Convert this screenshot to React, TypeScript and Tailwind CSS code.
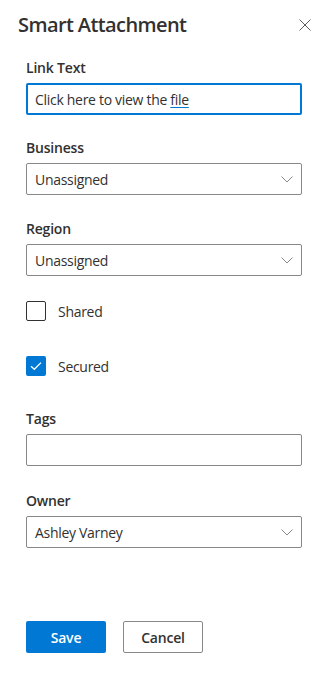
import React from "react";

const font = { fontFamily: '"Open Sans", "Noto Sans", sans-serif' };

function Chevron() {
  return (
    <svg width="12" height="7" viewBox="0 0 12 7" className="absolute right-[8px] top-[12px]">
      <path d="M0.5 0.5 L6 6 L11.5 0.5" fill="none" stroke="#8a8886" strokeWidth="1" />
    </svg>
  );
}

function Label({ children }: { children: React.ReactNode }) {
  return <div className="py-[5px] text-[14px] leading-5 font-semibold text-[#323130] tracking-[-0.2px]">{children}</div>;
}

function Dropdown({ value }: { value: string }) {
  return (
    <div className="relative h-[32px] border border-[#8a8886] rounded-[2px] pl-[8px] pr-[28px] flex items-center text-[14px] text-[#323130] tracking-[-0.3px]">
      <span>{value}</span>
      <Chevron />
    </div>
  );
}

export default function App() {
  return (
    <div className="w-[331px] h-[693px] bg-white text-[#323130]" style={font}>
      <div className="flex items-start justify-between pl-[18px] pr-[20px] pt-[11px] h-[43px]">
        <div className="text-[20px] leading-[28px] font-semibold tracking-[-0.6px]">Smart Attachment</div>
        <svg width="12" height="12" viewBox="0 0 12 12" className="mt-[8px]">
          <path d="M0.5 0.5 L11.5 11.5 M11.5 0.5 L0.5 11.5" stroke="#605e5c" strokeWidth="1" />
        </svg>
      </div>
      <div className="px-[26px] pr-[29px]">
        <div className="mt-[10px]">
          <Label>Link Text</Label>
          <div className="h-[32px] border-2 border-[#0078d4] rounded-[2px] pl-[7px] flex items-center text-[14px] tracking-[-0.3px]">
            <span>
              Click here to view the{" "}
              <span className="underline decoration-[#0078d4] underline-offset-2">file</span>
            </span>
          </div>
        </div>
        <div className="mt-[18px]">
          <Label>Business</Label>
          <Dropdown value="Unassigned" />
        </div>
        <div className="mt-[19px]">
          <Label>Region</Label>
          <Dropdown value="Unassigned" />
        </div>
        <div className="mt-[25px] flex items-center gap-[12px] h-[20px]">
          <div className="w-[20px] h-[20px] border border-[#323130] rounded-[2px]" />
          <span className="text-[14px] tracking-[-0.3px]">Shared</span>
        </div>
        <div className="mt-[35px] flex items-center gap-[12px] h-[20px]">
          <div className="w-[20px] h-[20px] bg-[#0078d4] rounded-[2px] flex items-center justify-center">
            <svg width="12" height="10" viewBox="0 0 12 10">
              <path d="M1 5.2 L4.3 8.3 L11 1.6" fill="none" stroke="white" strokeWidth="1.3" />
            </svg>
          </div>
          <span className="text-[14px] tracking-[-0.3px]">Secured</span>
        </div>
        <div className="mt-[28px]">
          <Label>Tags</Label>
          <div className="h-[32px] border border-[#8a8886] rounded-[2px]" />
        </div>
        <div className="mt-[20px]">
          <Label>Owner</Label>
          <Dropdown value="Ashley Varney" />
        </div>
        <div className="mt-[73px] flex gap-[17px]">
          <button className="w-[80px] h-[32px] rounded-[2px] bg-[#0078d4] text-white text-[14px] font-semibold tracking-[-0.2px]">Save</button>
          <button className="w-[80px] h-[32px] rounded-[2px] border border-[#8a8886] bg-white text-[#323130] text-[14px] font-semibold tracking-[-0.2px]">Cancel</button>
        </div>
      </div>
    </div>
  );
}
